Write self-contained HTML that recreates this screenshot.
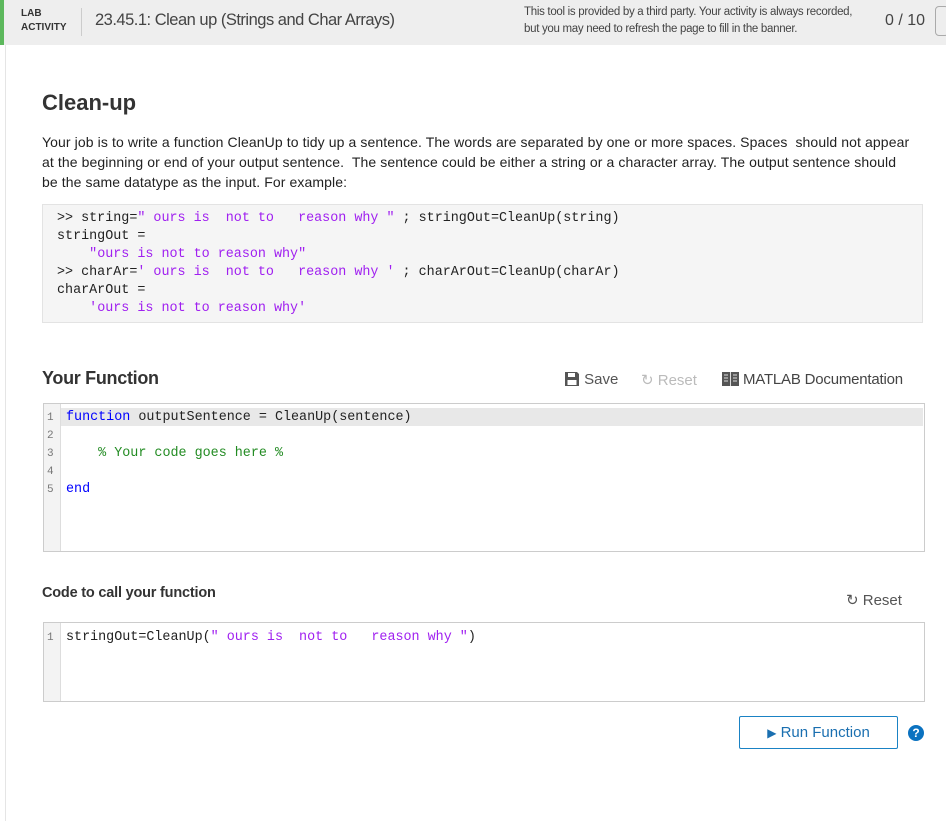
<!DOCTYPE html>
<html><head><style>
body{margin:0;width:946px;height:821px;background:#fff;font-family:"Liberation Sans",sans-serif;position:relative;overflow:hidden;color:#222}
.hdr{position:absolute;left:0;top:0;width:946px;height:45px;background:#eeeeee;border-left:4px solid #5cb85c;box-sizing:border-box}
.abs{position:absolute}
.mono{font-family:"Liberation Mono","DejaVu Sans Mono",monospace;font-size:13.4px;line-height:18px;white-space:pre}
.m{color:#a020f0}.k{color:#0000ff}.c{color:#228b22}
.sans{font-family:"Liberation Sans",sans-serif}
.gut{font-family:"Liberation Mono",monospace;font-size:11px;color:#777;line-height:18px;white-space:pre}
</style></head><body>
<div class="hdr"></div>
<div class="abs" style="left:21px;top:7px;font-size:10px;font-weight:bold;line-height:14px;color:#333">LAB<br>ACTIVITY</div>
<div class="abs" style="left:81px;top:8px;width:1px;height:28px;background:#ccc"></div>
<div class="abs" style="left:95px;top:11px;font-size:16.5px;color:#444;letter-spacing:-0.5px">23.45.1: Clean up (Strings and Char Arrays)</div>
<div class="abs" style="left:524px;top:4px;font-size:11.5px;line-height:17px;color:#444;letter-spacing:-0.3px">This tool is provided by a third party. Your activity is always recorded,<br>but you may need to refresh the page to fill in the banner.</div>
<div class="abs" style="left:885px;top:12px;font-size:16px;color:#444">0 / 10</div>
<div class="abs" style="left:935px;top:6px;width:12px;height:28px;border:1px solid #aaa;border-radius:4px;background:#eee"></div>
<div class="abs" style="left:5px;top:45px;width:1px;height:776px;background:#e5e5e5"></div>

<div class="abs sans" style="left:42px;top:90px;font-size:22px;font-weight:bold;color:#333">Clean-up</div>
<div class="abs" style="left:42px;top:132px;font-size:14px;line-height:20px;color:#222;letter-spacing:0.1px;white-space:nowrap">Your job is to write a function CleanUp to tidy up a sentence. The words are separated by one or more spaces. Spaces&nbsp; should not appear<br>at the beginning or end of your output sentence.&nbsp; The sentence could be either a string or a character array. The output sentence should<br>be the same datatype as the input. For example:</div>
<div class="abs" style="left:42px;top:204px;width:879px;height:117px;background:#f5f5f5;border:1px solid #e3e3e3"></div>
<div class="abs mono" style="left:57px;top:210px">&gt;&gt; string=<span class="m">" ours is  not to   reason why "</span> ; stringOut=CleanUp(string)
stringOut =
    <span class="m">"ours is not to reason why"</span>
&gt;&gt; charAr=<span class="m">' ours is  not to   reason why '</span> ; charArOut=CleanUp(charAr)
charArOut =
    <span class="m">'ours is not to reason why'</span></div>

<div class="abs sans" style="left:42px;top:368px;font-size:18px;font-weight:bold;color:#333;letter-spacing:-0.3px">Your Function</div>
<div class="abs sans" style="left:564px;top:371px;font-size:15px;color:#555">
<svg width="16" height="16" viewBox="0 0 16 16" style="vertical-align:-3px"><path d="M1 1h12l2 2v12H1z" fill="#555"/><rect x="4" y="2" width="7" height="4" fill="#fff"/><rect x="3.5" y="9" width="9" height="5" fill="#fff"/></svg> Save</div>
<div class="abs sans" style="left:641px;top:371px;font-size:15px;color:#bbb">&#8635; Reset</div>
<div class="abs sans" style="left:722px;top:371px;font-size:15px;color:#444;letter-spacing:-0.2px">
<svg width="17" height="14" viewBox="0 0 17 14" style="vertical-align:-2px"><rect width="17" height="14" fill="#555"/><rect x="8" y="0" width="1" height="14" fill="#ddd"/><path d="M2 3h4M2 6h4M2 9h4M11 3h4M11 6h4M11 9h4" stroke="#ddd"/></svg> MATLAB Documentation</div>

<div class="abs" style="left:43px;top:403px;width:880px;height:147px;border:1px solid #ccc;background:#fff"></div>
<div class="abs" style="left:44px;top:404px;width:16px;height:147px;background:#f3f3f3;border-right:1px solid #ddd"></div>
<div class="abs" style="left:61px;top:408px;width:862px;height:18px;background:#e8e8e8"></div>
<div class="abs gut" style="left:47px;top:409px">1
2
3
4
5</div>
<div class="abs mono" style="left:66px;top:409px"><span class="k">function</span> outputSentence = CleanUp(sentence)

    <span class="c">% Your code goes here %</span>

<span class="k">end</span></div>

<div class="abs sans" style="left:42px;top:585px;font-size:14.5px;font-weight:bold;color:#333;letter-spacing:-0.2px">Code to call your function</div>
<div class="abs sans" style="left:846px;top:591px;font-size:15px;color:#555">&#8635; Reset</div>
<div class="abs" style="left:43px;top:622px;width:880px;height:78px;border:1px solid #ccc;background:#fff"></div>
<div class="abs" style="left:44px;top:623px;width:16px;height:78px;background:#f3f3f3;border-right:1px solid #ddd"></div>
<div class="abs gut" style="left:47px;top:629px">1</div>
<div class="abs mono" style="left:66px;top:629px">stringOut=CleanUp(<span class="m">" ours is  not to   reason why "</span>)</div>

<div class="abs sans" style="left:739px;top:716px;width:157px;height:31px;border:1px solid #1a82c4;border-radius:2px;color:#1a6fb0;font-size:15px;line-height:31px;text-align:center"><span style="font-size:12px">&#9654;</span> Run Function</div>
<div class="abs" style="left:908px;top:725px;width:16px;height:16px;border-radius:50%;background:#0b72c0;color:#fff;font-size:12px;font-weight:bold;text-align:center;line-height:16px">?</div>
</body></html>
